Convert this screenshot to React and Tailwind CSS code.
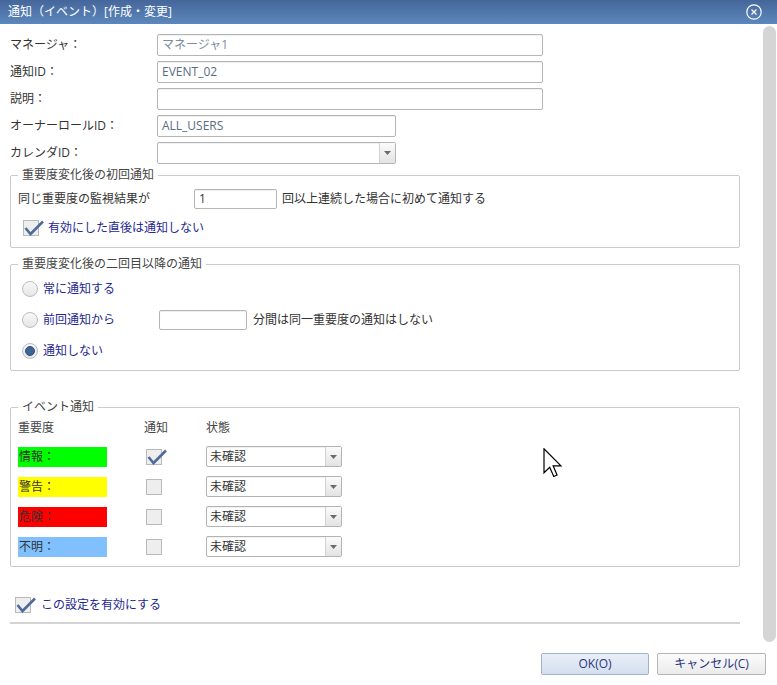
import React from "react";

const Check = ({ checked }) => (
  <div className="relative w-[16px] h-[16px] border border-[#b9b9b9] bg-[#eeeeee] shrink-0">
    {checked && (
      <svg
        className="absolute top-[-1px] left-[-1px] overflow-visible"
        width="22"
        height="16"
        viewBox="0 0 22 16"
      >
        <path d="M2.5 8 L7.5 14 L20 1.5" stroke="#4d6c99" strokeWidth="2.6" fill="none" />
      </svg>
    )}
  </div>
);

const Radio = ({ selected }) => (
  <div className="w-[16px] h-[16px] rounded-full border border-[#bdbdbd] bg-linear-to-b from-[#f8f8f8] to-[#e6e6e6] flex items-center justify-center shrink-0">
    {selected && <div className="w-[10px] h-[10px] rounded-full bg-[#3f6393] border border-[#2f4f7f]" />}
  </div>
);

const Arrow = () => (
  <svg width="7" height="4" viewBox="0 0 7 4">
    <path d="M0 0 L7 0 L3.5 4 Z" fill="#6b6b6b" />
  </svg>
);

const Select = ({ className, value }) => (
  <div className={className}>
    <div className="flex-1 flex items-center pl-[3px] text-[12px] leading-[16px] text-[#333]">{value}</div>
    <div className="w-[16px] border-l border-[#d2d2d2] bg-linear-to-b from-[#fbfbfb] to-[#e3e3e3] flex items-center justify-center">
      <Arrow />
    </div>
  </div>
);

const Field = ({ label, children }) => (
  <div className="flex items-center h-[22px]">
    <div className="w-[147px] text-[12px] leading-[16px] text-[#333]">{label}</div>
    {children}
  </div>
);

const inputCls =
  "h-[22px] border border-[#b5b5b5] rounded-[2px] bg-white flex items-center px-[4px] text-[12px] leading-[16px] shadow-[inset_0_1px_1px_rgba(0,0,0,0.07)]";

const SevRow = ({ label, bg, checked }) => (
  <div className="flex items-center h-[21px]">
    <div className={bg}>{label}</div>
    <div className="ml-[39px]">
      <Check checked={checked} />
    </div>
    <Select
      value="未確認"
      className="ml-[44px] flex h-[21px] w-[136px] border border-[#b3b3b3] rounded-[2px] bg-white shadow-[inset_0_1px_1px_rgba(0,0,0,0.06)]"
    />
  </div>
);

export default function App() {
  return (
    <div className="relative w-[777px] h-[685px] overflow-hidden bg-white flex flex-col font-['Open_Sans','Noto_Sans_CJK_JP',sans-serif] text-[#333]">
      {/* Title bar */}
      <div className="h-[24px] shrink-0 bg-linear-to-b from-[#45669a] to-[#5c88bd] flex items-center justify-between pl-[8px] pr-[15px]">
        <span className="text-white text-[12px] leading-[16px]">通知（イベント）[作成・変更]</span>
        <svg width="16" height="16" viewBox="0 0 16 16">
          <circle cx="8" cy="8" r="7.2" stroke="white" strokeWidth="1.2" fill="none" />
          <path d="M5.5 5.5 L10.5 10.5 M10.5 5.5 L5.5 10.5" stroke="white" strokeWidth="1.2" />
        </svg>
      </div>

      {/* Body */}
      <div className="flex h-[620px] shrink-0">
        <div className="w-[740px] pl-[10px] pt-[10px] flex flex-col">
          <div className="flex flex-col gap-[5px]">
            <Field label="マネージャ：">
              <div className={inputCls + " w-[386px] text-[#7c8ba0]"}>マネージャ1</div>
            </Field>
            <Field label="通知ID：">
              <div className={inputCls + " w-[386px] text-[#5a6b82]"}>EVENT_02</div>
            </Field>
            <Field label="説明：">
              <div className={inputCls + " w-[386px]"}></div>
            </Field>
            <Field label="オーナーロールID：">
              <div className={inputCls + " w-[239px] text-[#5a6b82]"}>ALL_USERS</div>
            </Field>
            <Field label="カレンダID：">
              <Select
                value=""
                className="flex h-[22px] w-[239px] border border-[#b5b5b5] rounded-[2px] bg-white shadow-[inset_0_1px_1px_rgba(0,0,0,0.06)]"
              />
            </Field>
          </div>

          {/* Fieldset 1 */}
          <fieldset className="mt-[3px] border border-[#cacaca] rounded-[2px] px-[7px] pb-[10px] min-w-0">
            <legend className="px-[4px] text-[12px] leading-[16px] text-[#444]">重要度変化後の初回通知</legend>
            <div className="flex items-center h-[20px] mt-[6px] text-[12px] leading-[16px]">
              <span className="w-[176px]">同じ重要度の監視結果が</span>
              <div className={"h-[20px] w-[83px] border border-[#b5b5b5] rounded-[2px] bg-white flex items-center px-[4px] shadow-[inset_0_1px_1px_rgba(0,0,0,0.07)]"}>
                1
              </div>
              <span className="ml-[5px]">回以上連続した場合に初めて通知する</span>
            </div>
            <div className="flex items-center h-[18px] mt-[10px] pl-[5px]">
              <Check checked />
              <span className="ml-[9px] text-[12px] leading-[16px] text-[#25278e]">有効にした直後は通知しない</span>
            </div>
          </fieldset>

          {/* Fieldset 2 */}
          <fieldset className="mt-[8px] border border-[#cacaca] rounded-[2px] px-[7px] pb-[9px] min-w-0">
            <legend className="px-[4px] text-[12px] leading-[16px] text-[#444]">重要度変化後の二回目以降の通知</legend>
            <div className="flex flex-col gap-[11px] mt-[7px]">
              <div className="flex items-center h-[20px] pl-[4px]">
                <Radio />
                <span className="ml-[5px] text-[12px] leading-[16px] text-[#25278e]">常に通知する</span>
              </div>
              <div className="flex items-center h-[20px] pl-[4px]">
                <div className="flex items-center w-[137px]">
                  <Radio />
                  <span className="ml-[5px] text-[12px] leading-[16px] text-[#25278e]">前回通知から</span>
                </div>
                <div className="h-[20px] w-[88px] border border-[#b5b5b5] rounded-[2px] bg-white shadow-[inset_0_1px_1px_rgba(0,0,0,0.07)]"></div>
                <span className="ml-[6px] text-[12px] leading-[16px]">分間は同一重要度の通知はしない</span>
              </div>
              <div className="flex items-center h-[20px] pl-[4px]">
                <Radio selected />
                <span className="ml-[5px] text-[12px] leading-[16px] text-[#25278e]">通知しない</span>
              </div>
            </div>
          </fieldset>

          {/* Fieldset 3 */}
          <fieldset className="mt-[28px] border border-[#cacaca] rounded-[2px] px-[7px] pb-[9px] min-w-0">
            <legend className="px-[4px] text-[12px] leading-[16px] text-[#444]">イベント通知</legend>
            <div className="flex items-center h-[16px] mt-[5px] text-[12px] leading-[16px] text-[#444]">
              <span className="w-[126px]">重要度</span>
              <span className="w-[62px]">通知</span>
              <span>状態</span>
            </div>
            <div className="flex flex-col gap-[9px] mt-[10px]">
              <SevRow label="情報：" checked bg="w-[89px] h-[20px] bg-[#00ff00] pl-[1px] flex items-center text-[12px] leading-[16px] text-[#333]" />
              <SevRow label="警告：" bg="w-[89px] h-[20px] bg-[#ffff00] pl-[1px] flex items-center text-[12px] leading-[16px] text-[#333]" />
              <SevRow label="危険：" bg="w-[89px] h-[20px] bg-[#ff0000] pl-[1px] flex items-center text-[12px] leading-[16px] text-[#333]" />
              <SevRow label="不明：" bg="w-[89px] h-[20px] bg-[#80c0ff] pl-[1px] flex items-center text-[12px] leading-[16px] text-[#333]" />
            </div>
          </fieldset>

          <div className="flex items-center h-[16px] mt-[30px] pl-[5px]">
            <Check checked />
            <span className="ml-[10px] text-[12px] leading-[16px] text-[#25278e]">この設定を有効にする</span>
          </div>
          <div className="mt-[9px] h-[2px] w-[730px] bg-[#d3d3d3]" />
        </div>
        <div className="ml-[23px] mt-[2px] w-[13px] h-[616px] rounded-full bg-[#d5d5d5]" />
      </div>

      {/* Footer */}
      <div className="mt-[9px] flex justify-end gap-[8px] pr-[11px]">
        <button className="h-[22px] w-[108px] border border-[#a3b3cb] rounded-[2px] bg-linear-to-b from-[#e9eff8] to-[#d4dfee] text-[12px] leading-[16px] text-[#2a3580]">
          OK(O)
        </button>
        <button className="h-[22px] w-[109px] border border-[#b5b5b5] rounded-[2px] bg-linear-to-b from-[#fbfbfb] to-[#ebebeb] text-[12px] leading-[16px] text-[#2a3580]">
          キャンセル(C)
        </button>
      </div>

      {/* Mouse cursor */}
      <svg className="absolute left-[543px] top-[448px]" width="20" height="30" viewBox="0 0 13 20">
        <path d="M0.5 0.5 L0.5 16.5 L4.3 12.8 L7 19 L9.2 18 L6.6 11.9 L11.8 11.9 Z" fill="white" stroke="black" strokeWidth="0.8" strokeLinejoin="miter" />
      </svg>
    </div>
  );
}
